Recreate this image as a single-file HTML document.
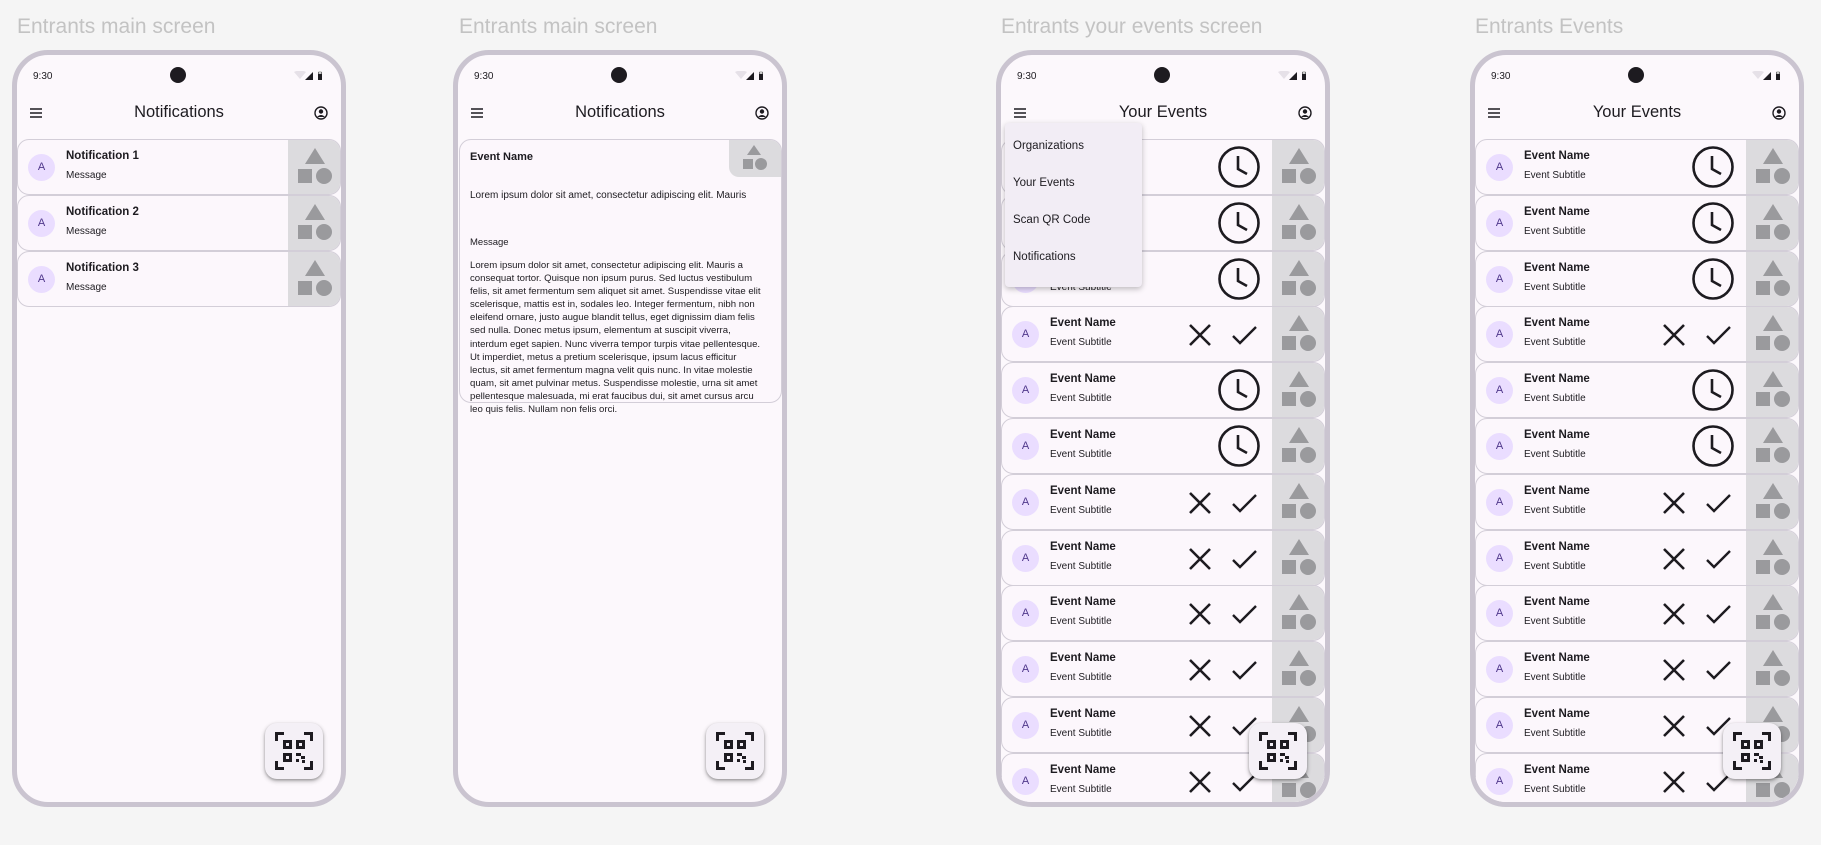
<!DOCTYPE html>
<html><head><meta charset="utf-8"><style>
*{box-sizing:border-box;margin:0;padding:0}
body{width:1821px;height:845px;background:#f5f5f5;font-family:"Liberation Sans",sans-serif;position:relative;overflow:hidden;color:#1d1b20}
.lbl{position:absolute;top:15px;font-size:21px;color:#c3c3c3}
.ph{position:absolute;top:50px;width:334px;height:757px;border:5px solid #cac4d0;border-radius:36px;background:#fcf8fc;overflow:hidden}
.t930{position:absolute;left:16px;top:16px;font-size:10px}
.cam{position:absolute;left:153px;top:12px;width:16px;height:16px;border-radius:50%;background:#1d1b20}
.st{position:absolute;left:277px;top:16px}
.ham{position:absolute;left:13px;top:53px}
.prof{position:absolute;left:297px;top:51px}
.ttl{position:absolute;left:0;width:324px;top:48px;text-align:center;font-size:16.5px}
.row{position:absolute;left:0;width:324px;height:56px;border:1px solid #d3ced8;border-radius:12px;background:#fcf7fc;overflow:hidden}
.av{position:absolute;left:10px;top:14px;width:27px;height:27px;border-radius:50%;background:#eaddff;color:#4f378b;font-size:11px;text-align:center;line-height:27px}
.rt{position:absolute;left:48px;top:10px;font-size:11.5px;font-weight:bold;color:#1d1b20}
.rs{position:absolute;left:48px;top:30px;font-size:10px;color:#1d1b20}
.img{position:absolute;left:270px;top:0;width:54px;height:56px;background:#dcdbde}
.img svg{position:absolute;left:0;top:0}
.ic{position:absolute;top:0;left:0}
.fab{position:absolute;left:248px;top:668px;width:58px;height:56px;border-radius:12px;background:#f4f0f6;box-shadow:0 2px 5px rgba(0,0,0,.3),0 1px 2px rgba(0,0,0,.2)}
.fab svg{position:absolute;left:9px;top:8px}
.menu{position:absolute;left:4px;top:68px;width:137px;height:164px;background:#f2edf5;border-radius:4px;box-shadow:0 2px 6px rgba(0,0,0,.25)}
.menu div{position:absolute;left:8px;font-size:11.5px;color:#1d1b20}
</style></head><body>
<svg width="0" height="0" style="position:absolute">
<defs>
<g id="shp"><polygon points="27,8 37,24 17,24" fill="#9a9a9d"/><rect x="10" y="29" width="14" height="14" fill="#9a9a9d"/><circle cx="36" cy="36" r="8" fill="#9a9a9d"/></g>
<g id="clk"><circle cx="237" cy="27" r="19.5" fill="none" stroke="#1d1b20" stroke-width="2.6"/><path d="M236 16 V29 L245 34" fill="none" stroke="#1d1b20" stroke-width="2.6"/></g>
<g id="xc"><path d="M188 18 L208 38 M208 18 L188 38" stroke="#1d1b20" stroke-width="2.6"/><path d="M231 29 L238 36 L254 20" fill="none" stroke="#1d1b20" stroke-width="2.4"/></g>
<g id="qr" fill="#1d1b20"><path d="M1 1h9v3H4v6H1z M30 1h9v9h-3V4h-6z M1 30h3v6h6v3H1z M36 30h3v9h-9v-3h6z"/><path d="M9 9h9v9H9z M12 12v3h3v-3z" fill-rule="evenodd"/><path d="M22 9h9v9h-9z M25 12v3h3v-3z" fill-rule="evenodd"/><path d="M9 22h9v9H9z M12 25v3h3v-3z" fill-rule="evenodd"/><path d="M22 22h5v3h-5z M27 25h4v3h-4z M22 28h3v3h-3z M28 29h3v3h-3z"/></g>
<g id="stat"><path d="M0 1 Q6 -2 12 1 L6 8z" fill="#e6e1e8"/><path d="M11 9 L19 1 V9z" fill="#1d1b20"/><rect x="24" y="1" width="4" height="8" fill="#1d1b20"/><rect x="24.5" y="0" width="3" height="3" fill="#c9c9c9"/></g>
<g id="hm"><path d="M0 1h12M0 5h12M0 9h12" stroke="#1d1b20" stroke-width="1.5"/></g>
<g id="pf"><circle cx="7" cy="7" r="6" fill="none" stroke="#1d1b20" stroke-width="1.4"/><circle cx="7" cy="5.5" r="2.2" fill="#1d1b20"/><path d="M3 11 Q7 7 11 11z" fill="#1d1b20"/></g>
</defs></svg>

<div class="lbl" style="left:17px">Entrants main screen</div>
<div class="lbl" style="left:459px">Entrants main screen</div>
<div class="lbl" style="left:1001px">Entrants your events screen</div>
<div class="lbl" style="left:1475px">Entrants Events</div>

<div class="ph" style="left:12px">
<div class="t930">9:30</div><div class="cam"></div>
<svg class="st" width="30" height="10"><use href="#stat"/></svg>
<svg class="ham" width="12" height="10"><use href="#hm"/></svg>
<svg class="prof" width="14" height="14"><use href="#pf"/></svg>
<div class="ttl">Notifications</div>
<div class="row" style="top:84px"><div class="av">A</div><div class="rt">Notification 1</div><div class="rs">Message</div><div class="img"><svg width="54" height="56"><use href="#shp"/></svg></div></div>
<div class="row" style="top:140px"><div class="av">A</div><div class="rt">Notification 2</div><div class="rs">Message</div><div class="img"><svg width="54" height="56"><use href="#shp"/></svg></div></div>
<div class="row" style="top:196px"><div class="av">A</div><div class="rt">Notification 3</div><div class="rs">Message</div><div class="img"><svg width="54" height="56"><use href="#shp"/></svg></div></div>
<div class="fab"><svg width="40" height="40"><use href="#qr"/></svg></div>
</div>

<div class="ph" style="left:453px">
<div class="t930">9:30</div><div class="cam"></div>
<svg class="st" width="30" height="10"><use href="#stat"/></svg>
<svg class="ham" width="12" height="10"><use href="#hm"/></svg>
<svg class="prof" width="14" height="14"><use href="#pf"/></svg>
<div class="ttl">Notifications</div>
<div style="position:absolute;left:1px;top:84px;width:323px;height:264px;border:1px solid #d3ced8;border-radius:12px;background:#fcf7fc;overflow:hidden">
<div style="position:absolute;left:269px;top:0;width:54px;height:37px;background:#dcdbde;border-bottom-left-radius:10px"><svg width="54" height="37"><polygon points="25,5 32,15 18,15" fill="#9a9a9d"/><rect x="14" y="19" width="10" height="10" fill="#9a9a9d"/><circle cx="32" cy="24" r="6" fill="#9a9a9d"/></svg></div>
<div style="position:absolute;left:10px;top:11px;font-size:11px;font-weight:bold">Event Name</div>
<div style="position:absolute;left:10px;top:50px;font-size:10px">Lorem ipsum dolor sit amet, consectetur adipiscing elit. Mauris</div>
</div>
<div style="position:absolute;left:12px;top:182px;font-size:9.5px">Message</div>
<div style="position:absolute;left:12px;top:204px;width:296px;font-size:9.6px;line-height:13.1px">Lorem ipsum dolor sit amet, consectetur adipiscing elit. Mauris a consequat tortor. Quisque non ipsum purus. Sed luctus vestibulum felis, sit amet fermentum sem aliquet sit amet. Suspendisse vitae elit scelerisque, mattis est in, sodales leo. Integer fermentum, nibh non eleifend ornare, justo augue blandit tellus, eget dignissim diam felis sed nulla. Donec metus ipsum, elementum at suscipit viverra, interdum eget sapien. Nunc viverra tempor turpis vitae pellentesque. Ut imperdiet, metus a pretium scelerisque, ipsum lacus efficitur lectus, sit amet fermentum magna velit quis nunc. In vitae molestie quam, sit amet pulvinar metus. Suspendisse molestie, urna sit amet pellentesque malesuada, mi erat faucibus dui, sit amet cursus arcu leo quis felis. Nullam non felis orci.</div>
<div class="fab"><svg width="40" height="40"><use href="#qr"/></svg></div>
</div>

<div class="ph" style="left:996px">
<div class="t930">9:30</div><div class="cam"></div>
<svg class="st" width="30" height="10"><use href="#stat"/></svg>
<svg class="ham" width="12" height="10"><use href="#hm"/></svg>
<svg class="prof" width="14" height="14"><use href="#pf"/></svg>
<div class="ttl">Your Events</div>
<div class="row" style="top:84px"><div class="av">A</div><div class="rt">Event Name</div><div class="rs">Event Subtitle</div><svg class="ic" width="270" height="56"><use href="#clk"/></svg><div class="img"><svg width="54" height="56"><use href="#shp"/></svg></div></div>
<div class="row" style="top:140px"><div class="av">A</div><div class="rt">Event Name</div><div class="rs">Event Subtitle</div><svg class="ic" width="270" height="56"><use href="#clk"/></svg><div class="img"><svg width="54" height="56"><use href="#shp"/></svg></div></div>
<div class="row" style="top:196px"><div class="av">A</div><div class="rt">Event Name</div><div class="rs">Event Subtitle</div><svg class="ic" width="270" height="56"><use href="#clk"/></svg><div class="img"><svg width="54" height="56"><use href="#shp"/></svg></div></div>
<div class="row" style="top:251px"><div class="av">A</div><div class="rt">Event Name</div><div class="rs">Event Subtitle</div><svg class="ic" width="270" height="56"><use href="#xc"/></svg><div class="img"><svg width="54" height="56"><use href="#shp"/></svg></div></div>
<div class="row" style="top:307px"><div class="av">A</div><div class="rt">Event Name</div><div class="rs">Event Subtitle</div><svg class="ic" width="270" height="56"><use href="#clk"/></svg><div class="img"><svg width="54" height="56"><use href="#shp"/></svg></div></div>
<div class="row" style="top:363px"><div class="av">A</div><div class="rt">Event Name</div><div class="rs">Event Subtitle</div><svg class="ic" width="270" height="56"><use href="#clk"/></svg><div class="img"><svg width="54" height="56"><use href="#shp"/></svg></div></div>
<div class="row" style="top:419px"><div class="av">A</div><div class="rt">Event Name</div><div class="rs">Event Subtitle</div><svg class="ic" width="270" height="56"><use href="#xc"/></svg><div class="img"><svg width="54" height="56"><use href="#shp"/></svg></div></div>
<div class="row" style="top:475px"><div class="av">A</div><div class="rt">Event Name</div><div class="rs">Event Subtitle</div><svg class="ic" width="270" height="56"><use href="#xc"/></svg><div class="img"><svg width="54" height="56"><use href="#shp"/></svg></div></div>
<div class="row" style="top:530px"><div class="av">A</div><div class="rt">Event Name</div><div class="rs">Event Subtitle</div><svg class="ic" width="270" height="56"><use href="#xc"/></svg><div class="img"><svg width="54" height="56"><use href="#shp"/></svg></div></div>
<div class="row" style="top:586px"><div class="av">A</div><div class="rt">Event Name</div><div class="rs">Event Subtitle</div><svg class="ic" width="270" height="56"><use href="#xc"/></svg><div class="img"><svg width="54" height="56"><use href="#shp"/></svg></div></div>
<div class="row" style="top:642px"><div class="av">A</div><div class="rt">Event Name</div><div class="rs">Event Subtitle</div><svg class="ic" width="270" height="56"><use href="#xc"/></svg><div class="img"><svg width="54" height="56"><use href="#shp"/></svg></div></div>
<div class="row" style="top:698px"><div class="av">A</div><div class="rt">Event Name</div><div class="rs">Event Subtitle</div><svg class="ic" width="270" height="56"><use href="#xc"/></svg><div class="img"><svg width="54" height="56"><use href="#shp"/></svg></div></div>
<div class="menu"><div style="top:17px">Organizations</div><div style="top:54px">Your Events</div><div style="top:91px">Scan QR Code</div><div style="top:128px">Notifications</div></div>
<div class="fab"><svg width="40" height="40"><use href="#qr"/></svg></div>
</div>

<div class="ph" style="left:1470px">
<div class="t930">9:30</div><div class="cam"></div>
<svg class="st" width="30" height="10"><use href="#stat"/></svg>
<svg class="ham" width="12" height="10"><use href="#hm"/></svg>
<svg class="prof" width="14" height="14"><use href="#pf"/></svg>
<div class="ttl">Your Events</div>
<div class="row" style="top:84px"><div class="av">A</div><div class="rt">Event Name</div><div class="rs">Event Subtitle</div><svg class="ic" width="270" height="56"><use href="#clk"/></svg><div class="img"><svg width="54" height="56"><use href="#shp"/></svg></div></div>
<div class="row" style="top:140px"><div class="av">A</div><div class="rt">Event Name</div><div class="rs">Event Subtitle</div><svg class="ic" width="270" height="56"><use href="#clk"/></svg><div class="img"><svg width="54" height="56"><use href="#shp"/></svg></div></div>
<div class="row" style="top:196px"><div class="av">A</div><div class="rt">Event Name</div><div class="rs">Event Subtitle</div><svg class="ic" width="270" height="56"><use href="#clk"/></svg><div class="img"><svg width="54" height="56"><use href="#shp"/></svg></div></div>
<div class="row" style="top:251px"><div class="av">A</div><div class="rt">Event Name</div><div class="rs">Event Subtitle</div><svg class="ic" width="270" height="56"><use href="#xc"/></svg><div class="img"><svg width="54" height="56"><use href="#shp"/></svg></div></div>
<div class="row" style="top:307px"><div class="av">A</div><div class="rt">Event Name</div><div class="rs">Event Subtitle</div><svg class="ic" width="270" height="56"><use href="#clk"/></svg><div class="img"><svg width="54" height="56"><use href="#shp"/></svg></div></div>
<div class="row" style="top:363px"><div class="av">A</div><div class="rt">Event Name</div><div class="rs">Event Subtitle</div><svg class="ic" width="270" height="56"><use href="#clk"/></svg><div class="img"><svg width="54" height="56"><use href="#shp"/></svg></div></div>
<div class="row" style="top:419px"><div class="av">A</div><div class="rt">Event Name</div><div class="rs">Event Subtitle</div><svg class="ic" width="270" height="56"><use href="#xc"/></svg><div class="img"><svg width="54" height="56"><use href="#shp"/></svg></div></div>
<div class="row" style="top:475px"><div class="av">A</div><div class="rt">Event Name</div><div class="rs">Event Subtitle</div><svg class="ic" width="270" height="56"><use href="#xc"/></svg><div class="img"><svg width="54" height="56"><use href="#shp"/></svg></div></div>
<div class="row" style="top:530px"><div class="av">A</div><div class="rt">Event Name</div><div class="rs">Event Subtitle</div><svg class="ic" width="270" height="56"><use href="#xc"/></svg><div class="img"><svg width="54" height="56"><use href="#shp"/></svg></div></div>
<div class="row" style="top:586px"><div class="av">A</div><div class="rt">Event Name</div><div class="rs">Event Subtitle</div><svg class="ic" width="270" height="56"><use href="#xc"/></svg><div class="img"><svg width="54" height="56"><use href="#shp"/></svg></div></div>
<div class="row" style="top:642px"><div class="av">A</div><div class="rt">Event Name</div><div class="rs">Event Subtitle</div><svg class="ic" width="270" height="56"><use href="#xc"/></svg><div class="img"><svg width="54" height="56"><use href="#shp"/></svg></div></div>
<div class="row" style="top:698px"><div class="av">A</div><div class="rt">Event Name</div><div class="rs">Event Subtitle</div><svg class="ic" width="270" height="56"><use href="#xc"/></svg><div class="img"><svg width="54" height="56"><use href="#shp"/></svg></div></div>
<div class="fab"><svg width="40" height="40"><use href="#qr"/></svg></div>
</div>
</body></html>
